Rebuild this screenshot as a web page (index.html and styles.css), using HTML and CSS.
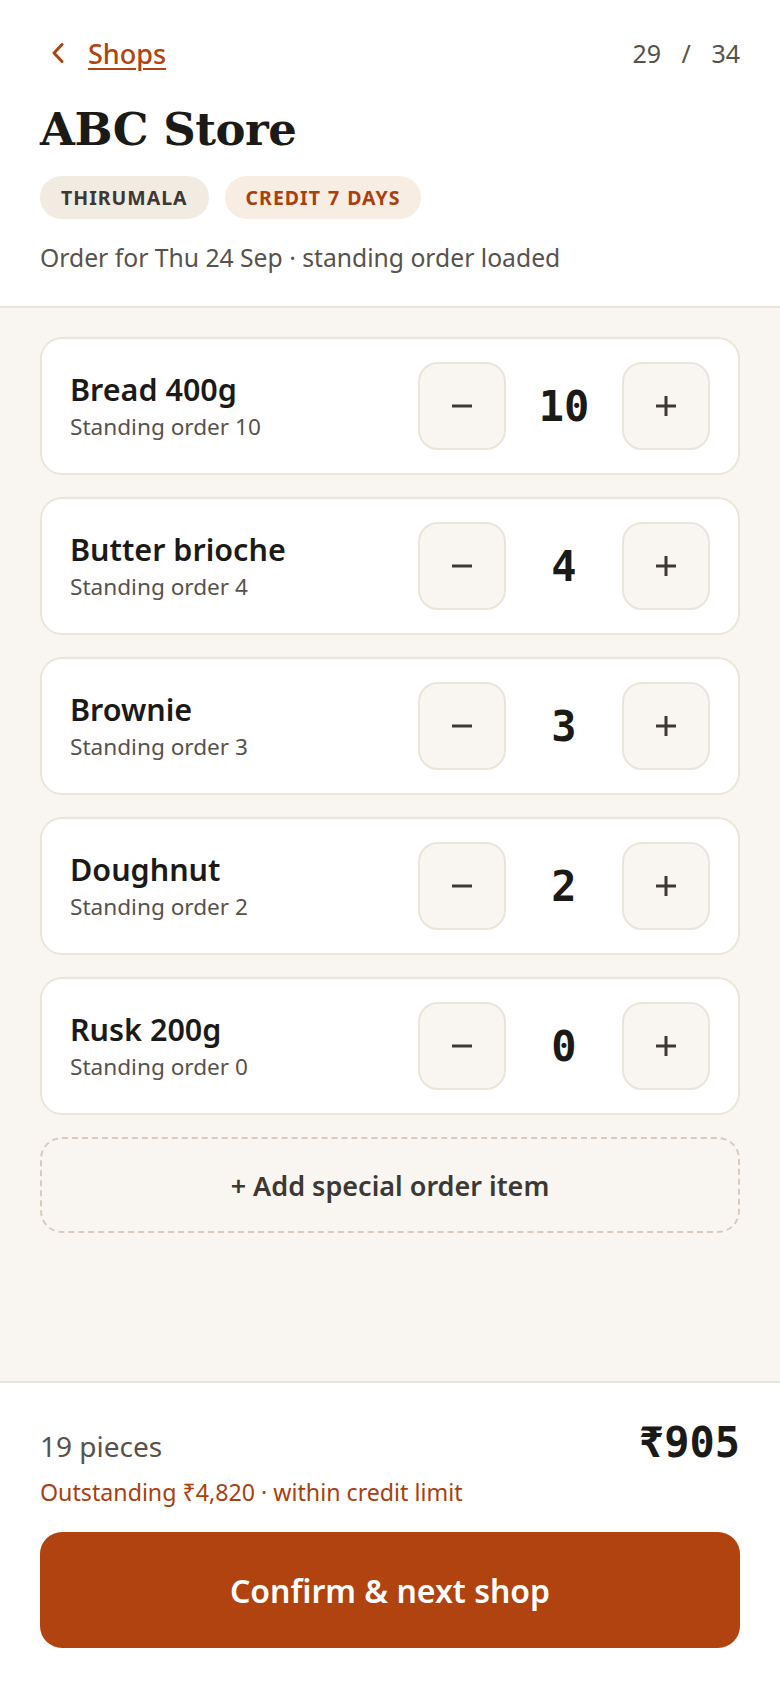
FILE: index.html
```html
<!DOCTYPE html>
<html lang="en">
<head>
  <meta charset="UTF-8" />
  <meta name="viewport" content="width=device-width, initial-scale=1" />
  <title>ABC Store - Order</title>
  <link rel="stylesheet" href="styles.css">
</head>
<body>
  <!-- Shop header -->
  <header class="shop-head">
    <div class="nav-row">
      <a href="#" class="back">
        <svg class="chev" width="12" height="20" viewBox="0 0 12 20" aria-hidden="true">
          <polyline points="10,1.5 2,10 10,18.5" fill="none" stroke="currentColor" stroke-width="3" stroke-linecap="round" stroke-linejoin="round" />
        </svg>
        <span>Shops</span>
      </a>
      <div class="count">29 <span class="slash">/</span> 34</div>
    </div>
    <h1>ABC Store</h1>
    <div class="chips">
      <span class="chip chip-route">THIRUMALA</span>
      <span class="chip chip-credit">CREDIT 7 DAYS</span>
    </div>
    <p class="order-note">Order for Thu 24 Sep · standing order loaded</p>
  </header>

  <!-- Items list -->
  <main class="items">
    <div class="item">
      <div class="item-info">
        <div class="item-name">Bread 400g</div>
        <div class="item-std">Standing order 10</div>
      </div>
      <div class="stepper">
        <button class="step" aria-label="Less"><svg width="20" height="20" viewBox="0 0 20 20"><line x1="0" y1="10" x2="20" y2="10" /></svg></button>
        <span class="qty">10</span>
        <button class="step" aria-label="More"><svg width="20" height="20" viewBox="0 0 20 20"><line x1="0" y1="10" x2="20" y2="10" /><line x1="10" y1="0" x2="10" y2="20" /></svg></button>
      </div>
    </div>
    <div class="item">
      <div class="item-info">
        <div class="item-name">Butter brioche</div>
        <div class="item-std">Standing order 4</div>
      </div>
      <div class="stepper">
        <button class="step" aria-label="Less"><svg width="20" height="20" viewBox="0 0 20 20"><line x1="0" y1="10" x2="20" y2="10" /></svg></button>
        <span class="qty">4</span>
        <button class="step" aria-label="More"><svg width="20" height="20" viewBox="0 0 20 20"><line x1="0" y1="10" x2="20" y2="10" /><line x1="10" y1="0" x2="10" y2="20" /></svg></button>
      </div>
    </div>
    <div class="item">
      <div class="item-info">
        <div class="item-name">Brownie</div>
        <div class="item-std">Standing order 3</div>
      </div>
      <div class="stepper">
        <button class="step" aria-label="Less"><svg width="20" height="20" viewBox="0 0 20 20"><line x1="0" y1="10" x2="20" y2="10" /></svg></button>
        <span class="qty">3</span>
        <button class="step" aria-label="More"><svg width="20" height="20" viewBox="0 0 20 20"><line x1="0" y1="10" x2="20" y2="10" /><line x1="10" y1="0" x2="10" y2="20" /></svg></button>
      </div>
    </div>
    <div class="item">
      <div class="item-info">
        <div class="item-name">Doughnut</div>
        <div class="item-std">Standing order 2</div>
      </div>
      <div class="stepper">
        <button class="step" aria-label="Less"><svg width="20" height="20" viewBox="0 0 20 20"><line x1="0" y1="10" x2="20" y2="10" /></svg></button>
        <span class="qty">2</span>
        <button class="step" aria-label="More"><svg width="20" height="20" viewBox="0 0 20 20"><line x1="0" y1="10" x2="20" y2="10" /><line x1="10" y1="0" x2="10" y2="20" /></svg></button>
      </div>
    </div>
    <div class="item">
      <div class="item-info">
        <div class="item-name">Rusk 200g</div>
        <div class="item-std">Standing order 0</div>
      </div>
      <div class="stepper">
        <button class="step" aria-label="Less"><svg width="20" height="20" viewBox="0 0 20 20"><line x1="0" y1="10" x2="20" y2="10" /></svg></button>
        <span class="qty">0</span>
        <button class="step" aria-label="More"><svg width="20" height="20" viewBox="0 0 20 20"><line x1="0" y1="10" x2="20" y2="10" /><line x1="10" y1="0" x2="10" y2="20" /></svg></button>
      </div>
    </div>

    <button class="add-item">+ Add special order item</button>
  </main>

  <!-- Totals and confirm -->
  <footer class="summary">
    <div class="total-row">
      <span class="pieces">19 pieces</span>
      <span class="amount">₹905</span>
    </div>
    <div class="outstanding">Outstanding ₹4,820 · within credit limit</div>
    <button class="confirm">Confirm &amp; next shop</button>
  </footer>
</body>
</html>
```

FILE: styles.css
```css
* { box-sizing: border-box; }
body {
  font-family: "Noto Sans", Roboto, Arial, sans-serif;
  background: #fff;
  color: #1c1a17;
  margin: 0;
  padding: 0;
  height: 100vh;
  display: flex;
  flex-direction: column;
}
button {
  font-family: inherit;
  cursor: pointer;
}

/* header */
.shop-head {
  padding: 37px 40px 32px;
  border-bottom: 2px solid #e9e3db;
}
.nav-row {
  height: 32px;
  display: flex;
  align-items: center;
  justify-content: space-between;
}
.back {
  display: flex;
  align-items: center;
  gap: 24px;
  padding-left: 12px;
  color: #b0430f;
  font-size: 27px;
  font-weight: 500;
  text-decoration: underline;
  text-decoration-thickness: 2px;
  text-underline-offset: 4px;
}
.chev { display: block; }
.count {
  font-size: 25px;
  color: #57524c;
  word-spacing: 14px;
}
h1 {
  margin: 34px 0 0;
  font-family: "DejaVu Serif", "Liberation Serif", serif;
  font-size: 45px;
  line-height: 54px;
  font-weight: bold;
  letter-spacing: -0.5px;
  color: #1c1a17;
}
.chips {
  display: flex;
  gap: 16px;
  margin-top: 19px;
}
.chip {
  height: 43px;
  padding: 0 21px;
  border-radius: 22px;
  display: flex;
  align-items: center;
  font-size: 19.5px;
  font-weight: bold;
  letter-spacing: 1px;
  word-spacing: 1px;
}
.chip-route {
  background: #f1ebe2;
  color: #3d3833;
}
.chip-credit {
  background: #f8ede2;
  color: #a8400f;
}
.order-note {
  margin: 23px 0 0;
  font-size: 24.7px;
  line-height: 32px;
  color: #57524c;
}

/* items */
.items {
  flex: 1;
  background: #f9f6f1;
  padding: 29px 40px;
  display: flex;
  flex-direction: column;
  gap: 22px;
}
.item {
  background: #fff;
  border: 2px solid #ebe4da;
  border-radius: 22px;
  padding: 23px 28px;
  display: flex;
  align-items: center;
  justify-content: space-between;
}
.item-info {
  display: flex;
  flex-direction: column;
  gap: 4px;
}
.item-name {
  font-size: 30.5px;
  line-height: 38px;
  font-weight: 600;
  color: #1c1a17;
}
.item-std {
  font-size: 22.6px;
  line-height: 30px;
  color: #57524c;
}
.stepper {
  display: flex;
  align-items: center;
  gap: 14px;
}
.step {
  width: 88px;
  height: 88px;
  border: 2px solid #ebe4da;
  border-radius: 20px;
  background: #f9f6f1;
  padding: 0;
  display: flex;
  align-items: center;
  justify-content: center;
}
.step svg {
  display: block;
  stroke: #3d3833;
  stroke-width: 3;
}
.qty {
  width: 88px;
  text-align: center;
  font-family: "DejaVu Sans Mono", "Liberation Mono", monospace;
  font-size: 42px;
  font-weight: bold;
  color: #1c1a17;
}
.add-item {
  height: 96px;
  border: 2px dashed #d8cbbd;
  border-radius: 22px;
  background: transparent;
  color: #3d3833;
  font-size: 27px;
  font-weight: 600;
}

/* footer */
.summary {
  border-top: 2px solid #e9e3db;
  padding: 36px 40px 40px;
  background: #fff;
}
.total-row {
  display: flex;
  justify-content: space-between;
  align-items: baseline;
}
.pieces {
  font-size: 28px;
  line-height: 40px;
  color: #57524c;
}
.amount {
  font-family: "DejaVu Sans Mono", "Liberation Mono", monospace;
  font-size: 42px;
  line-height: 48px;
  font-weight: bold;
  color: #1c1a17;
}
.outstanding {
  margin-top: 10px;
  font-size: 23.2px;
  line-height: 30px;
  color: #a8400f;
}
.confirm {
  display: block;
  width: 100%;
  height: 116px;
  margin-top: 25px;
  border: none;
  border-radius: 22px;
  background: #b0430f;
  color: #fff;
  font-size: 32px;
  font-weight: 600;
}
```
